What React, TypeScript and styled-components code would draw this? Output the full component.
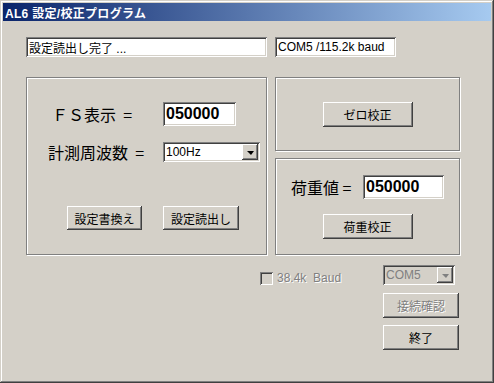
import styled, { createGlobalStyle } from "styled-components";

const GlobalStyle = createGlobalStyle`
    html, body {
        margin: 0;
        padding: 0;
        background: #d4d0c8;
        overflow: hidden;
    }
    * {
        box-sizing: border-box;
    }
`

const FONT = `"Liberation Sans", "Noto Sans CJK JP", sans-serif`

const raised = `
    box-shadow: inset -1px -1px #404040, inset 1px 1px #ffffff,
        inset -2px -2px #808080, inset 2px 2px #d4d0c8;
`

const sunken = `
    box-shadow: inset 1px 1px #808080, inset -1px -1px #ffffff,
        inset 2px 2px #404040, inset -2px -2px #d4d0c8;
`

const Window = styled.div`
    width: 494px;
    height: 383px;
    padding: 3px;
    background: #d4d0c8;
    box-shadow: inset -1px -1px #404040, inset 1px 1px #d4d0c8,
        inset -2px -2px #808080, inset 2px 2px #ffffff;
    font-family: ${FONT};
    display: flex;
    flex-direction: column;
`

const TitleBar = styled.div`
    height: 18px;
    display: flex;
    align-items: center;
    padding-left: 2px;
    background: linear-gradient(to right, #0a246a, #a6caf0);
    color: #fff;
    font-size: 12px;
    font-weight: bold;
    letter-spacing: 0.3px;
`

const Client = styled.div`
    padding: 16px 0 0 23px;
    display: flex;
    flex-direction: column;
`

const StatusRow = styled.div`
    display: flex;
    gap: 8px;
`

const TextBox = styled.div<{ w: number; h?: number; big?: boolean }>`
    width: ${(p) => p.w}px;
    height: ${(p) => p.h ?? 20}px;
    background: #fff;
    ${sunken}
    display: flex;
    align-items: center;
    padding: 0 3px;
    font-size: ${(p) => (p.big ? 16 : 12)}px;
    font-weight: ${(p) => (p.big ? "bold" : "normal")};
    color: #000;
    white-space: nowrap;
`

const GroupRow = styled.div`
    display: flex;
    gap: 8px;
    margin-top: 20px;
`

const Group = styled.div<{ w: number; h: number }>`
    width: ${(p) => p.w - 1}px;
    height: ${(p) => p.h - 1}px;
    border: 1px solid #808080;
    box-shadow: 1px 1px 0 #ffffff, inset 1px 1px 0 #ffffff;
    display: flex;
    flex-direction: column;
`

const SettingsGroup = styled(Group)`
    padding: 24px 0 0 21px;
`

const RightColumn = styled.div`
    display: flex;
    flex-direction: column;
    gap: 7px;
`

const ZeroGroup = styled(Group)`
    padding-top: 24px;
    align-items: center;
`

const LoadGroup = styled(Group)`
    padding-top: 16px;
    align-items: center;
`

const FormGrid = styled.div`
    display: grid;
    grid-template-columns: 115px auto;
    row-gap: 16px;
    align-items: center;
`

const Label = styled.div<{ indent?: number }>`
    font-family: "Noto Sans CJK JP", "Liberation Sans", sans-serif;
    font-size: 16px;
    color: #000;
    padding-left: ${(p) => p.indent ?? 0}px;
    white-space: pre;
    line-height: 1;
`

const ButtonRow = styled.div`
    display: flex;
    gap: 21px;
    margin: 44px 0 0 19px;
`

const Button = styled.div<{ w: number; h?: number; disabled?: boolean }>`
    width: ${(p) => p.w}px;
    height: ${(p) => p.h ?? 25}px;
    background: #d4d0c8;
    ${raised}
    display: flex;
    align-items: center;
    justify-content: center;
    font-family: "Noto Sans CJK JP", sans-serif;
    font-size: 12px;
    color: ${(p) => (p.disabled ? "#808080" : "#000")};
    text-shadow: ${(p) => (p.disabled ? "1px 1px 0 #fff" : "none")};
`

const Combo = styled.div<{ w: number; disabled?: boolean }>`
    width: ${(p) => p.w}px;
    height: 20px;
    background: ${(p) => (p.disabled ? "#d4d0c8" : "#fff")};
    ${sunken}
    display: flex;
    align-items: center;
    justify-content: space-between;
    padding: 2px;
    font-size: 12px;
    color: ${(p) => (p.disabled ? "#808080" : "#000")};
`

const ComboText = styled.span`
    padding-left: 1px;
`

const DropButton = styled.div`
    width: 16px;
    height: 16px;
    background: #d4d0c8;
    ${raised}
    display: flex;
    align-items: center;
    justify-content: center;
`

const Arrow = styled.div<{ disabled?: boolean }>`
    width: 0;
    height: 0;
    border-left: 4px solid transparent;
    border-right: 3px solid transparent;
    border-top: 4px solid ${(p) => (p.disabled ? "#808080" : "#000")};
    margin-top: 1px;
`

const LoadRow = styled.div`
    display: flex;
    align-items: center;
    align-self: stretch;
    padding-left: 15px;
`

const LoadLabel = styled(Label)`
    width: 72px;
`

const LoadButtonWrap = styled.div`
    margin-top: 15px;
`

const BottomRow = styled.div`
    display: flex;
    margin: 10px 0 0 234px;
`

const CheckArea = styled.div`
    width: 123px;
    display: flex;
    gap: 4px;
    padding-top: 7px;
    align-items: flex-start;
`

const CheckBox = styled.div`
    width: 13px;
    height: 13px;
    background: #d4d0c8;
    ${sunken}
`

const CheckLabel = styled.span`
    font-size: 12px;
    color: #808080;
    text-shadow: 1px 1px 0 #fff;
    line-height: 13px;
`

const ControlColumn = styled.div`
    display: flex;
    flex-direction: column;
    gap: 8px;
`

const Stack = styled.div`
    display: flex;
    flex-direction: column;
    gap: 7px;
`

export default function App() {
    return (
        <>
            <GlobalStyle />
            <Window>
                <TitleBar>AL6 設定/校正プログラム</TitleBar>
                <Client>
                    <StatusRow>
                        <TextBox w={241}>設定読出し完了 ...</TextBox>
                        <TextBox w={121}>COM5 /115.2k baud</TextBox>
                    </StatusRow>

                    <GroupRow>
                        <SettingsGroup w={242} h={179}>
                            <FormGrid>
                                <Label indent={4}>ＦＳ表示  =</Label>
                                <TextBox w={73} h={24} big>050000</TextBox>
                                <Label>計測周波数  =</Label>
                                <Combo w={97}>
                                    <ComboText>100Hz</ComboText>
                                    <DropButton><Arrow /></DropButton>
                                </Combo>
                            </FormGrid>
                            <ButtonRow>
                                <Button w={75} h={24}>設定書換え</Button>
                                <Button w={76} h={24}>設定読出し</Button>
                            </ButtonRow>
                        </SettingsGroup>

                        <RightColumn>
                            <ZeroGroup w={186} h={75}>
                                <Button w={90}>ゼロ校正</Button>
                            </ZeroGroup>
                            <LoadGroup w={186} h={98}>
                                <LoadRow>
                                    <LoadLabel>荷重値 =</LoadLabel>
                                    <TextBox w={81} h={24} big>050000</TextBox>
                                </LoadRow>
                                <LoadButtonWrap>
                                    <Button w={90}>荷重校正</Button>
                                </LoadButtonWrap>
                            </LoadGroup>
                        </RightColumn>
                    </GroupRow>

                    <BottomRow>
                        <CheckArea>
                            <CheckBox />
                            <CheckLabel>38.4k&nbsp; Baud</CheckLabel>
                        </CheckArea>
                        <ControlColumn>
                            <Combo w={72} disabled>
                                <ComboText>COM5</ComboText>
                                <DropButton><Arrow disabled /></DropButton>
                            </Combo>
                            <Stack>
                                <Button w={76} disabled>接続確認</Button>
                                <Button w={76}>終了</Button>
                            </Stack>
                        </ControlColumn>
                    </BottomRow>
                </Client>
            </Window>
        </>
    )
}
